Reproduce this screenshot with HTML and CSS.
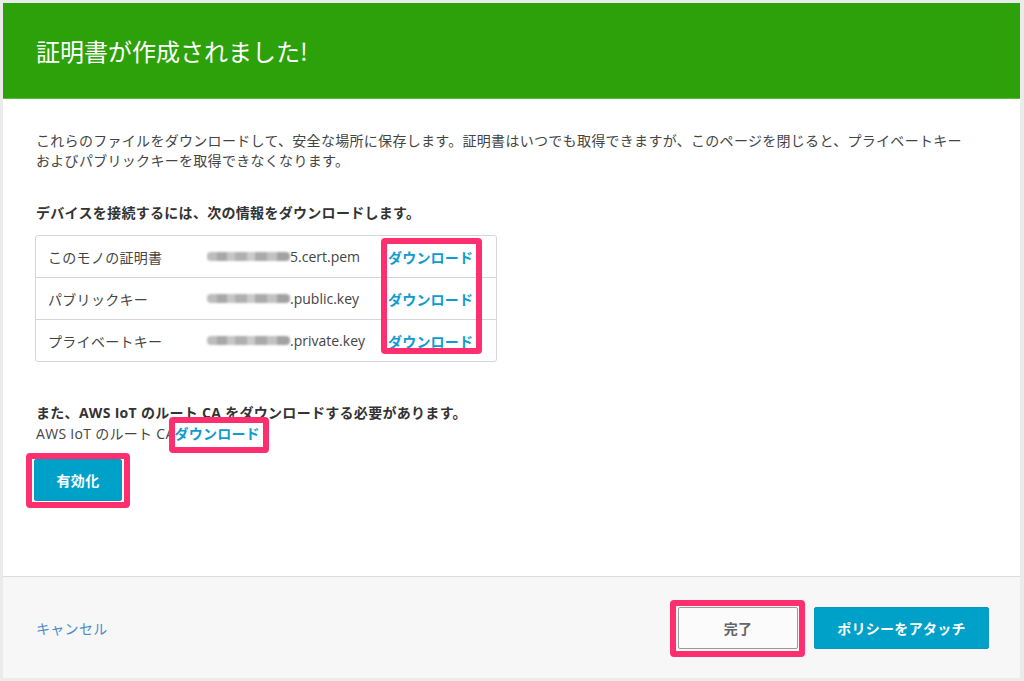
FILE: index.html
```html
<!DOCTYPE html>
<html lang="ja">
<head>
<meta charset="utf-8">
<title>証明書が作成されました!</title>
<link rel="stylesheet" href="styles.css">
</head>
<body>
<div class="card">
  <header class="header">
    <h1 class="title">証明書が作成されました!</h1>
  </header>
  <main class="main">
    <p class="intro">これらのファイルをダウンロードして、安全な場所に保存します。証明書はいつでも取得できますが、このページを閉じると、プライベートキーおよびパブリックキーを取得できなくなります。</p>
    <p class="heading">デバイスを接続するには、次の情報をダウンロードします。</p>
    <div class="files">
      <div class="row">
        <span class="label">このモノの証明書</span>
        <span class="fname"><span class="blur"></span>5.cert.pem</span>
        <a class="link" href="#">ダウンロード</a>
      </div>
      <div class="row">
        <span class="label">パブリックキー</span>
        <span class="fname"><span class="blur"></span>.public.key</span>
        <a class="link" href="#">ダウンロード</a>
      </div>
      <div class="row">
        <span class="label">プライベートキー</span>
        <span class="fname"><span class="blur"></span>.private.key</span>
        <a class="link" href="#">ダウンロード</a>
      </div>
      <div class="mark mark-col"></div>
    </div>
    <p class="heading heading-ca">また、AWS IoT のルート CA をダウンロードする必要があります。</p>
    <p class="ca-line">AWS IoT のルート CA<a class="link marked" href="#">ダウンロード</a></p>
    <div class="act-wrap"><button class="btn btn-primary btn-activate" type="button">有効化</button></div>
  </main>
  <footer class="footer">
    <a class="cancel" href="#">キャンセル</a>
    <div class="actions">
      <div class="done-wrap"><button class="btn btn-default" type="button">完了</button></div>
      <button class="btn btn-primary btn-policy" type="button">ポリシーをアタッチ</button>
    </div>
  </footer>
</div>
</body>
</html>
```
FILE: styles.css
```css
* { box-sizing: border-box; }

body {
  margin: 0;
  padding: 3px 4px 3px 3px;
  background: #ebebeb;
  font-family: "Open Sans", "Noto Sans CJK JP", sans-serif;
  font-size: 14px;
  letter-spacing: 0.3px;
  color: #444;
}

.card {
  height: 675px;
  background: #fff;
  display: flex;
  flex-direction: column;
}

.header {
  height: 96px;
  background: #2ca10a;
  border-bottom: 1px solid #55c13a;
  display: flex;
  align-items: center;
  padding-left: 33px;
  flex: none;
}

.title {
  margin: 0;
  font-family: "Noto Sans CJK JP", sans-serif;
  font-size: 24px;
  font-weight: 400;
  letter-spacing: 0;
  color: #fff;
}

.main {
  flex: 1;
  padding: 32px 0 0 33px;
}

.intro {
  margin: 0;
  line-height: 20px;
  max-width: 940px;
  color: #444;
}

.heading {
  margin: 32px 0 0;
  line-height: 20px;
  font-weight: 700;
  color: #333;
}

.files {
  position: relative;
  margin-top: 12px;
  margin-left: -1px;
  width: 462px;
  border: 1px solid #d6d6d6;
  border-radius: 3px;
}

.row {
  display: grid;
  grid-template-columns: 159px 181px 1fr;
  align-items: center;
  height: 42px;
  padding-left: 12px;
  border-top: 1px solid #d6d6d6;
  color: #444;
}

.row:first-child {
  border-top: 0;
  height: 41px;
}

.fname {
  display: flex;
  align-items: center;
  white-space: nowrap;
  letter-spacing: 0;
}

.blur {
  display: inline-block;
  width: 83px;
  height: 9px;
  border-radius: 4px;
  background: linear-gradient(90deg, #bdbdbd 0 12%, #a8a8a8 12% 24%, #c6c6c6 24% 34%, #b0b0b0 34% 48%, #cbcbcb 48% 58%, #aaaaaa 58% 72%, #c2c2c2 72% 84%, #a2a2a2 84% 100%);
  filter: blur(1.3px);
}

.link {
  color: #0d9bd0;
  font-weight: 700;
  text-decoration: none;
  letter-spacing: 0.2px;
  white-space: nowrap;
}

.mark {
  position: absolute;
  border: 6px solid #fe2f6f;
  border-radius: 4px;
  pointer-events: none;
}

.mark-col {
  left: 345px;
  top: 2px;
  width: 101px;
  height: 116px;
}

.heading-ca {
  margin-top: 41px;
}

.ca-line {
  margin: 0;
  line-height: 21px;
  color: #444;
}

.marked {
  position: relative;
  display: inline-block;
}

.marked::after {
  content: "";
  position: absolute;
  left: -6px;
  right: -9px;
  top: -6px;
  bottom: -9px;
  border: 6px solid #fe2f6f;
  border-radius: 4px;
}

.act-wrap,
.done-wrap {
  position: relative;
  display: inline-block;
}

.act-wrap {
  margin-top: 15px;
  margin-left: -2px;
}

.act-wrap::after,
.done-wrap::after {
  content: "";
  position: absolute;
  border: 6px solid #fe2f6f;
  border-radius: 4px;
  pointer-events: none;
}

.act-wrap::after {
  left: -8px;
  right: -8px;
  top: -6px;
  bottom: -7px;
}

.done-wrap::after {
  left: -8px;
  right: -7px;
  top: -7px;
  bottom: -8px;
}

.btn {
  display: block;
  height: 42px;
  border-radius: 2px;
  font-family: "Open Sans", "Noto Sans CJK JP", sans-serif;
  font-size: 14px;
  font-weight: 700;
  letter-spacing: 0.3px;
  cursor: pointer;
}

.btn-primary {
  background: #00a1c9;
  border: 1px solid #0a97bb;
  color: #fff;
}

.btn-activate {
  width: 88px;
}

.btn-default {
  width: 120px;
  background: #fbfbfb;
  border: 1px solid #9a9a9a;
  color: #666;
}

.btn-policy {
  width: 175px;
}

.footer {
  height: 102px;
  flex: none;
  background: #f7f7f7;
  border-top: 1px solid #dcdcdc;
  display: flex;
  align-items: center;
  padding: 0 31px 0 33px;
}

.cancel {
  color: #4a8bc8;
  text-decoration: none;
}

.actions {
  margin-left: auto;
  display: flex;
  align-items: center;
  gap: 16px;
}
```
